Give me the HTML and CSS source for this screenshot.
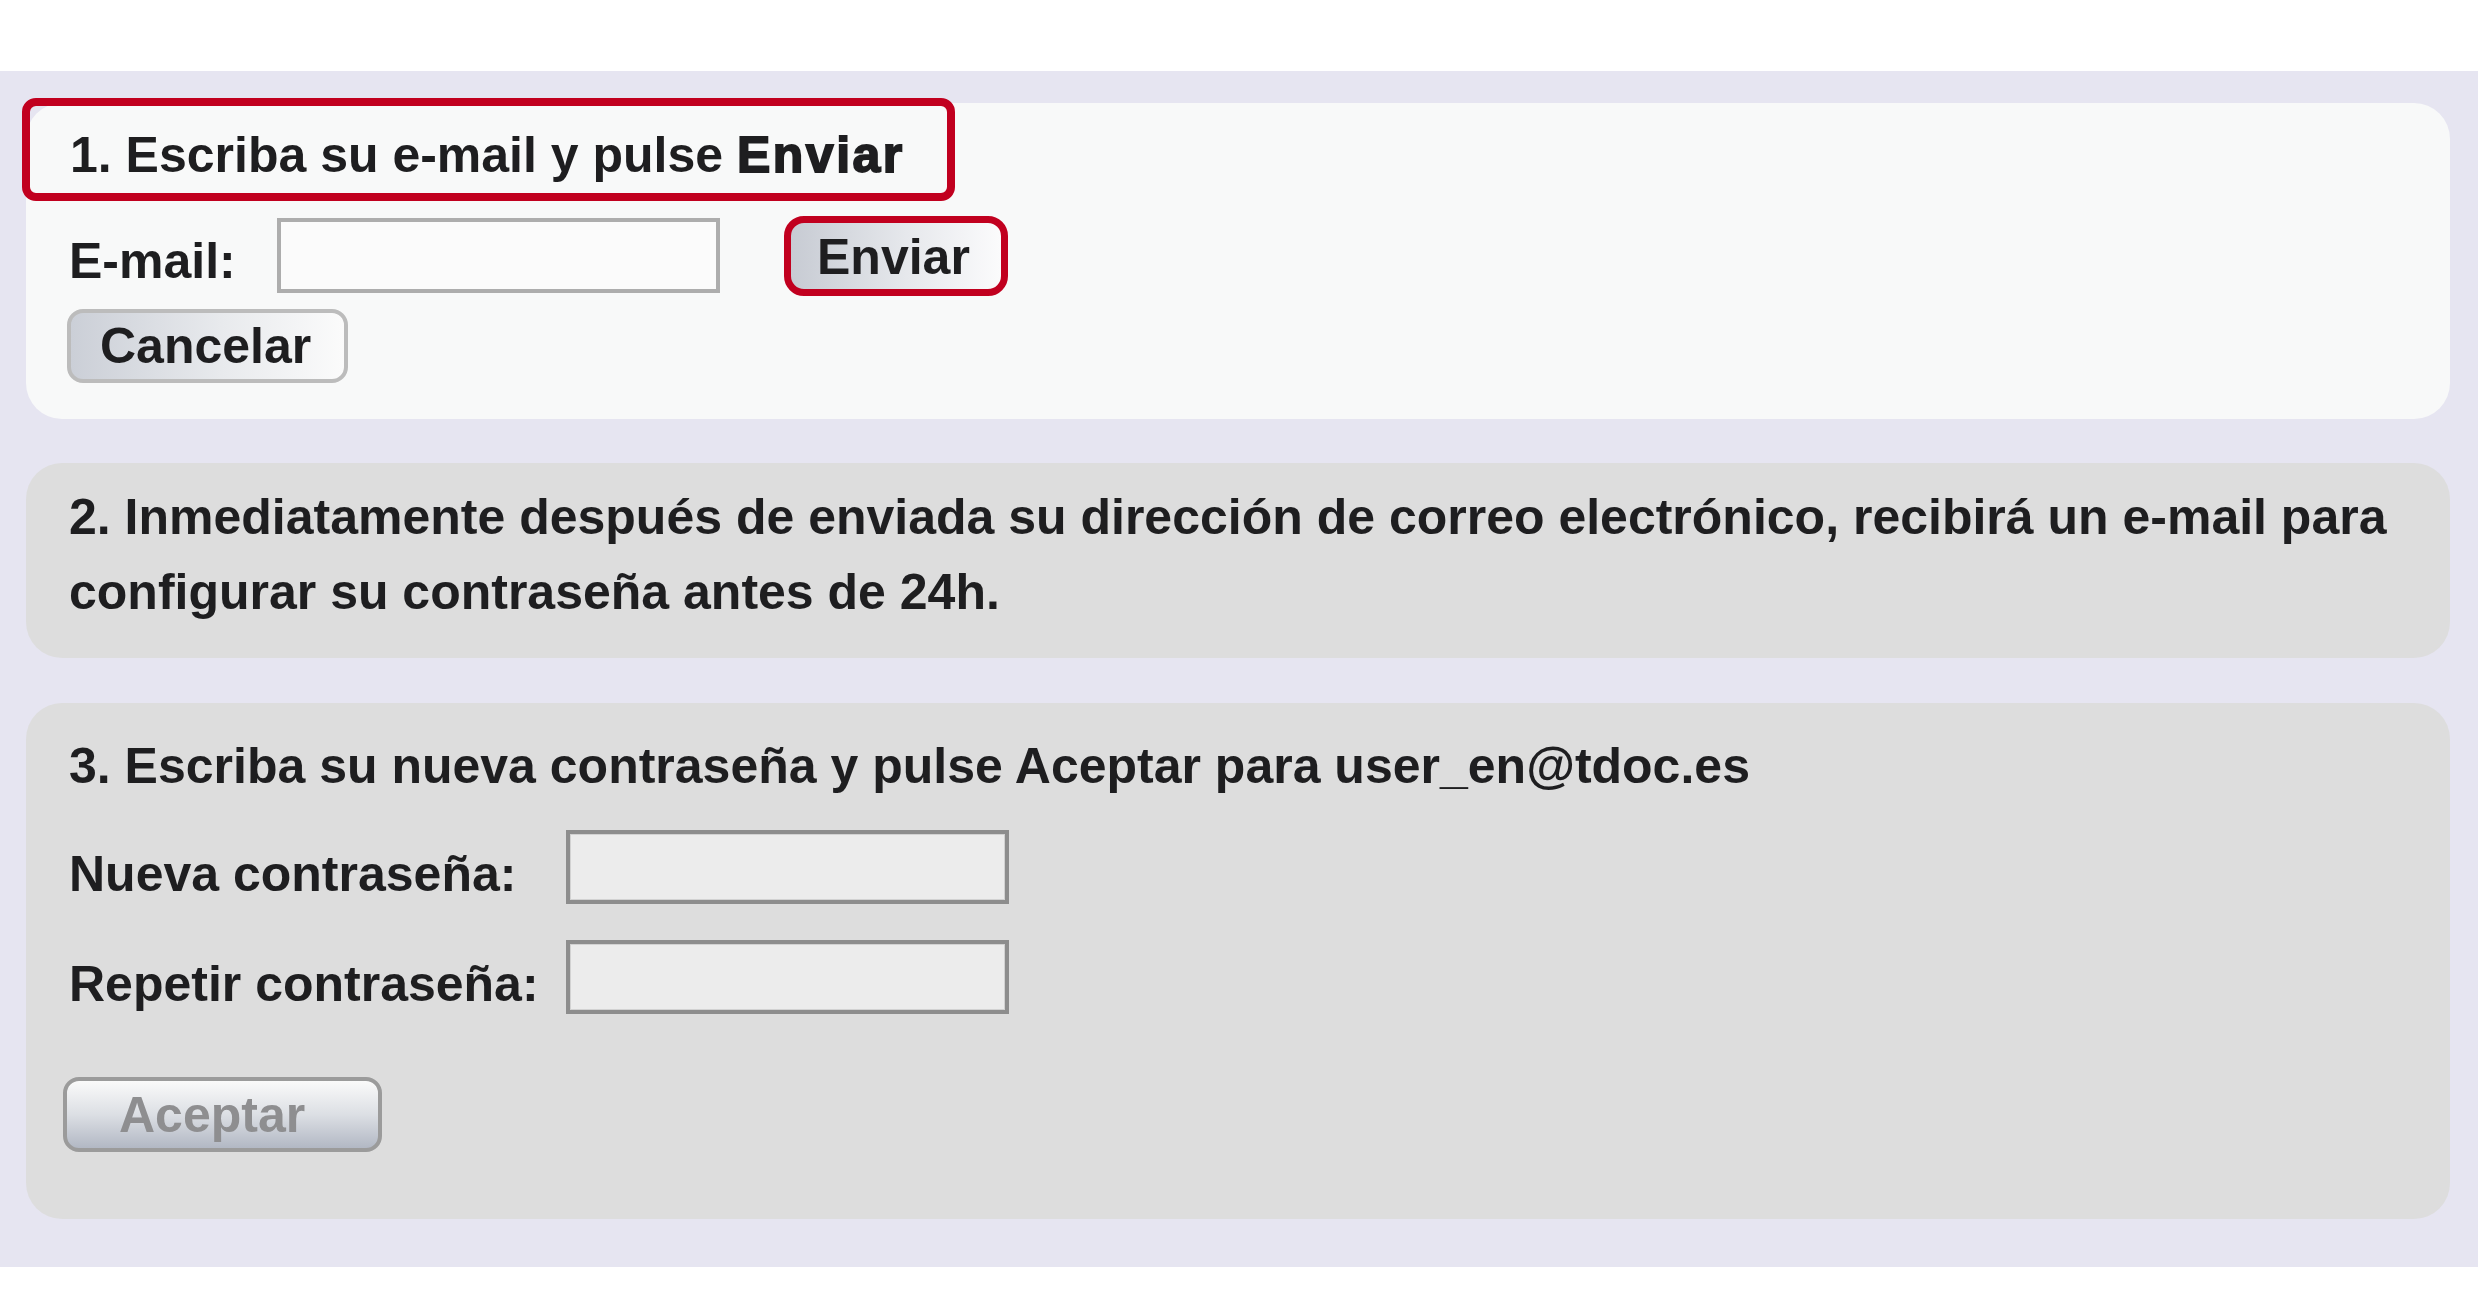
FILE: index.html
```html
<!DOCTYPE html>
<html lang="es">
<head>
<meta charset="utf-8">
<title>Restablecer contraseña</title>
<link rel="stylesheet" href="styles.css">
</head>
<body>
<div class="page">
  <section class="card card-light">
    <div class="step-title">1. Escriba su e-mail y pulse <strong>Enviar</strong></div>
    <div class="email-row">
      <label class="label label-email" for="email">E-mail:</label>
      <input class="field field-light" id="email" type="text">
      <button class="btn btn-send" type="button">Enviar</button>
    </div>
    <button class="btn btn-cancel" type="button">Cancelar</button>
  </section>

  <section class="card card-grey card-info">
    <p class="info-text">2. Inmediatamente después de enviada su dirección de correo electrónico, recibirá un e-mail para<br>configurar su contraseña antes de 24h.</p>
  </section>

  <section class="card card-grey card-pass">
    <div class="pass-title">3. Escriba su nueva contraseña y pulse Aceptar para user_en@tdoc.es</div>
    <div class="pass-row">
      <label class="label label-pass" for="p1">Nueva contraseña:</label>
      <input class="field field-grey" id="p1" type="password">
    </div>
    <div class="pass-row pass-row-second">
      <label class="label label-pass" for="p2">Repetir contraseña:</label>
      <input class="field field-grey" id="p2" type="password">
    </div>
    <button class="btn btn-accept" type="button" disabled>Aceptar</button>
  </section>
</div>
</body>
</html>
```

FILE: styles.css
```css
html, body {
  margin: 0;
  padding: 0;
  background: #ffffff;
}

body {
  font-family: "Liberation Sans", Arial, Helvetica, sans-serif;
  font-weight: 700;
  font-size: 50px;
  color: #1e1e20;
}

.page {
  margin-top: 71px;
  width: 2478px;
  height: 1196px;
  box-sizing: border-box;
  padding: 32px 0 0 26px;
  background: #e6e5f1;
}

.card {
  width: 2424px;
  box-sizing: border-box;
  border-radius: 36px;
  padding-left: 43px;
  display: flex;
  flex-direction: column;
  align-items: flex-start;
}

.card-light {
  background: #f8f9f9;
  padding-bottom: 36px;
}

.card-grey {
  background: #dddddd;
}

.step-title {
  margin: -5px 0 0 -47px;
  width: 933px;
  height: 103px;
  box-sizing: border-box;
  border: 8px solid #c1001f;
  border-radius: 14px;
  padding: 13px 0 0 40px;
  line-height: 72px;
  white-space: nowrap;
}

.step-title strong {
  -webkit-text-stroke: 1.8px #1e1e20;
  letter-spacing: 2.5px;
}

.email-row {
  display: flex;
  align-items: flex-start;
  margin-top: 15px;
  height: 80px;
}

.label {
  line-height: 56px;
  white-space: nowrap;
}

.label-email {
  width: 208px;
  margin-top: 17px;
}

.field {
  display: block;
  margin: 0;
  padding: 0;
  width: 443px;
  box-sizing: border-box;
  outline: none;
}

.field-light {
  margin-top: 2px;
  height: 75px;
  border: 4px solid #adadad;
  background: #fbfbfb;
}

.field-grey {
  height: 74px;
  border: 4px solid #8d8d8d;
  background: #ececec;
  box-shadow: inset 0 0 0 1px #d2d2d2;
}

.btn {
  display: block;
  margin: 0;
  box-sizing: border-box;
  font-family: "Liberation Sans", Arial, Helvetica, sans-serif;
  font-weight: 700;
  font-size: 50px;
  color: #1e1e20;
  text-align: left;
  white-space: nowrap;
  cursor: pointer;
}

.btn-send {
  margin-left: 64px;
  width: 224px;
  height: 80px;
  border: 7px solid #c1001f;
  border-radius: 20px;
  padding: 2px 0 0 26px;
  line-height: 64px;
  background: linear-gradient(to right, #c7cbd3 0%, #e6e8ec 55%, #fbfbfc 100%);
}

.btn-cancel {
  margin: 13px 0 0 -2px;
  width: 281px;
  height: 74px;
  border: 4px solid #bcbcbc;
  border-radius: 16px;
  padding: 0 0 0 29px;
  line-height: 66px;
  background: linear-gradient(to right, #cbcfd7 0%, #e8eaed 55%, #fbfbfb 100%);
}

.card-info {
  padding-top: 17px;
  padding-bottom: 28px;
  margin-top: 44px;
}

.info-text {
  margin: 0;
  line-height: 75px;
  white-space: nowrap;
}

.card-pass {
  margin-top: 45px;
  padding-top: 35px;
  padding-bottom: 67px;
}

.pass-title {
  line-height: 56px;
  white-space: nowrap;
}

.pass-row {
  display: flex;
  align-items: flex-start;
  margin-top: 36px;
}

.label-pass {
  width: 497px;
  margin-top: 16px;
}

.btn-accept {
  margin: 63px 0 0 -6px;
  width: 319px;
  height: 75px;
  border: 4px solid #9b9b9b;
  border-radius: 16px;
  padding: 0 0 0 52px;
  line-height: 60px;
  color: #8e8e90;
  background: linear-gradient(to bottom, #fafafa 0%, #dcdfe4 50%, #b2b8c4 100%);
  cursor: default;
}
```
